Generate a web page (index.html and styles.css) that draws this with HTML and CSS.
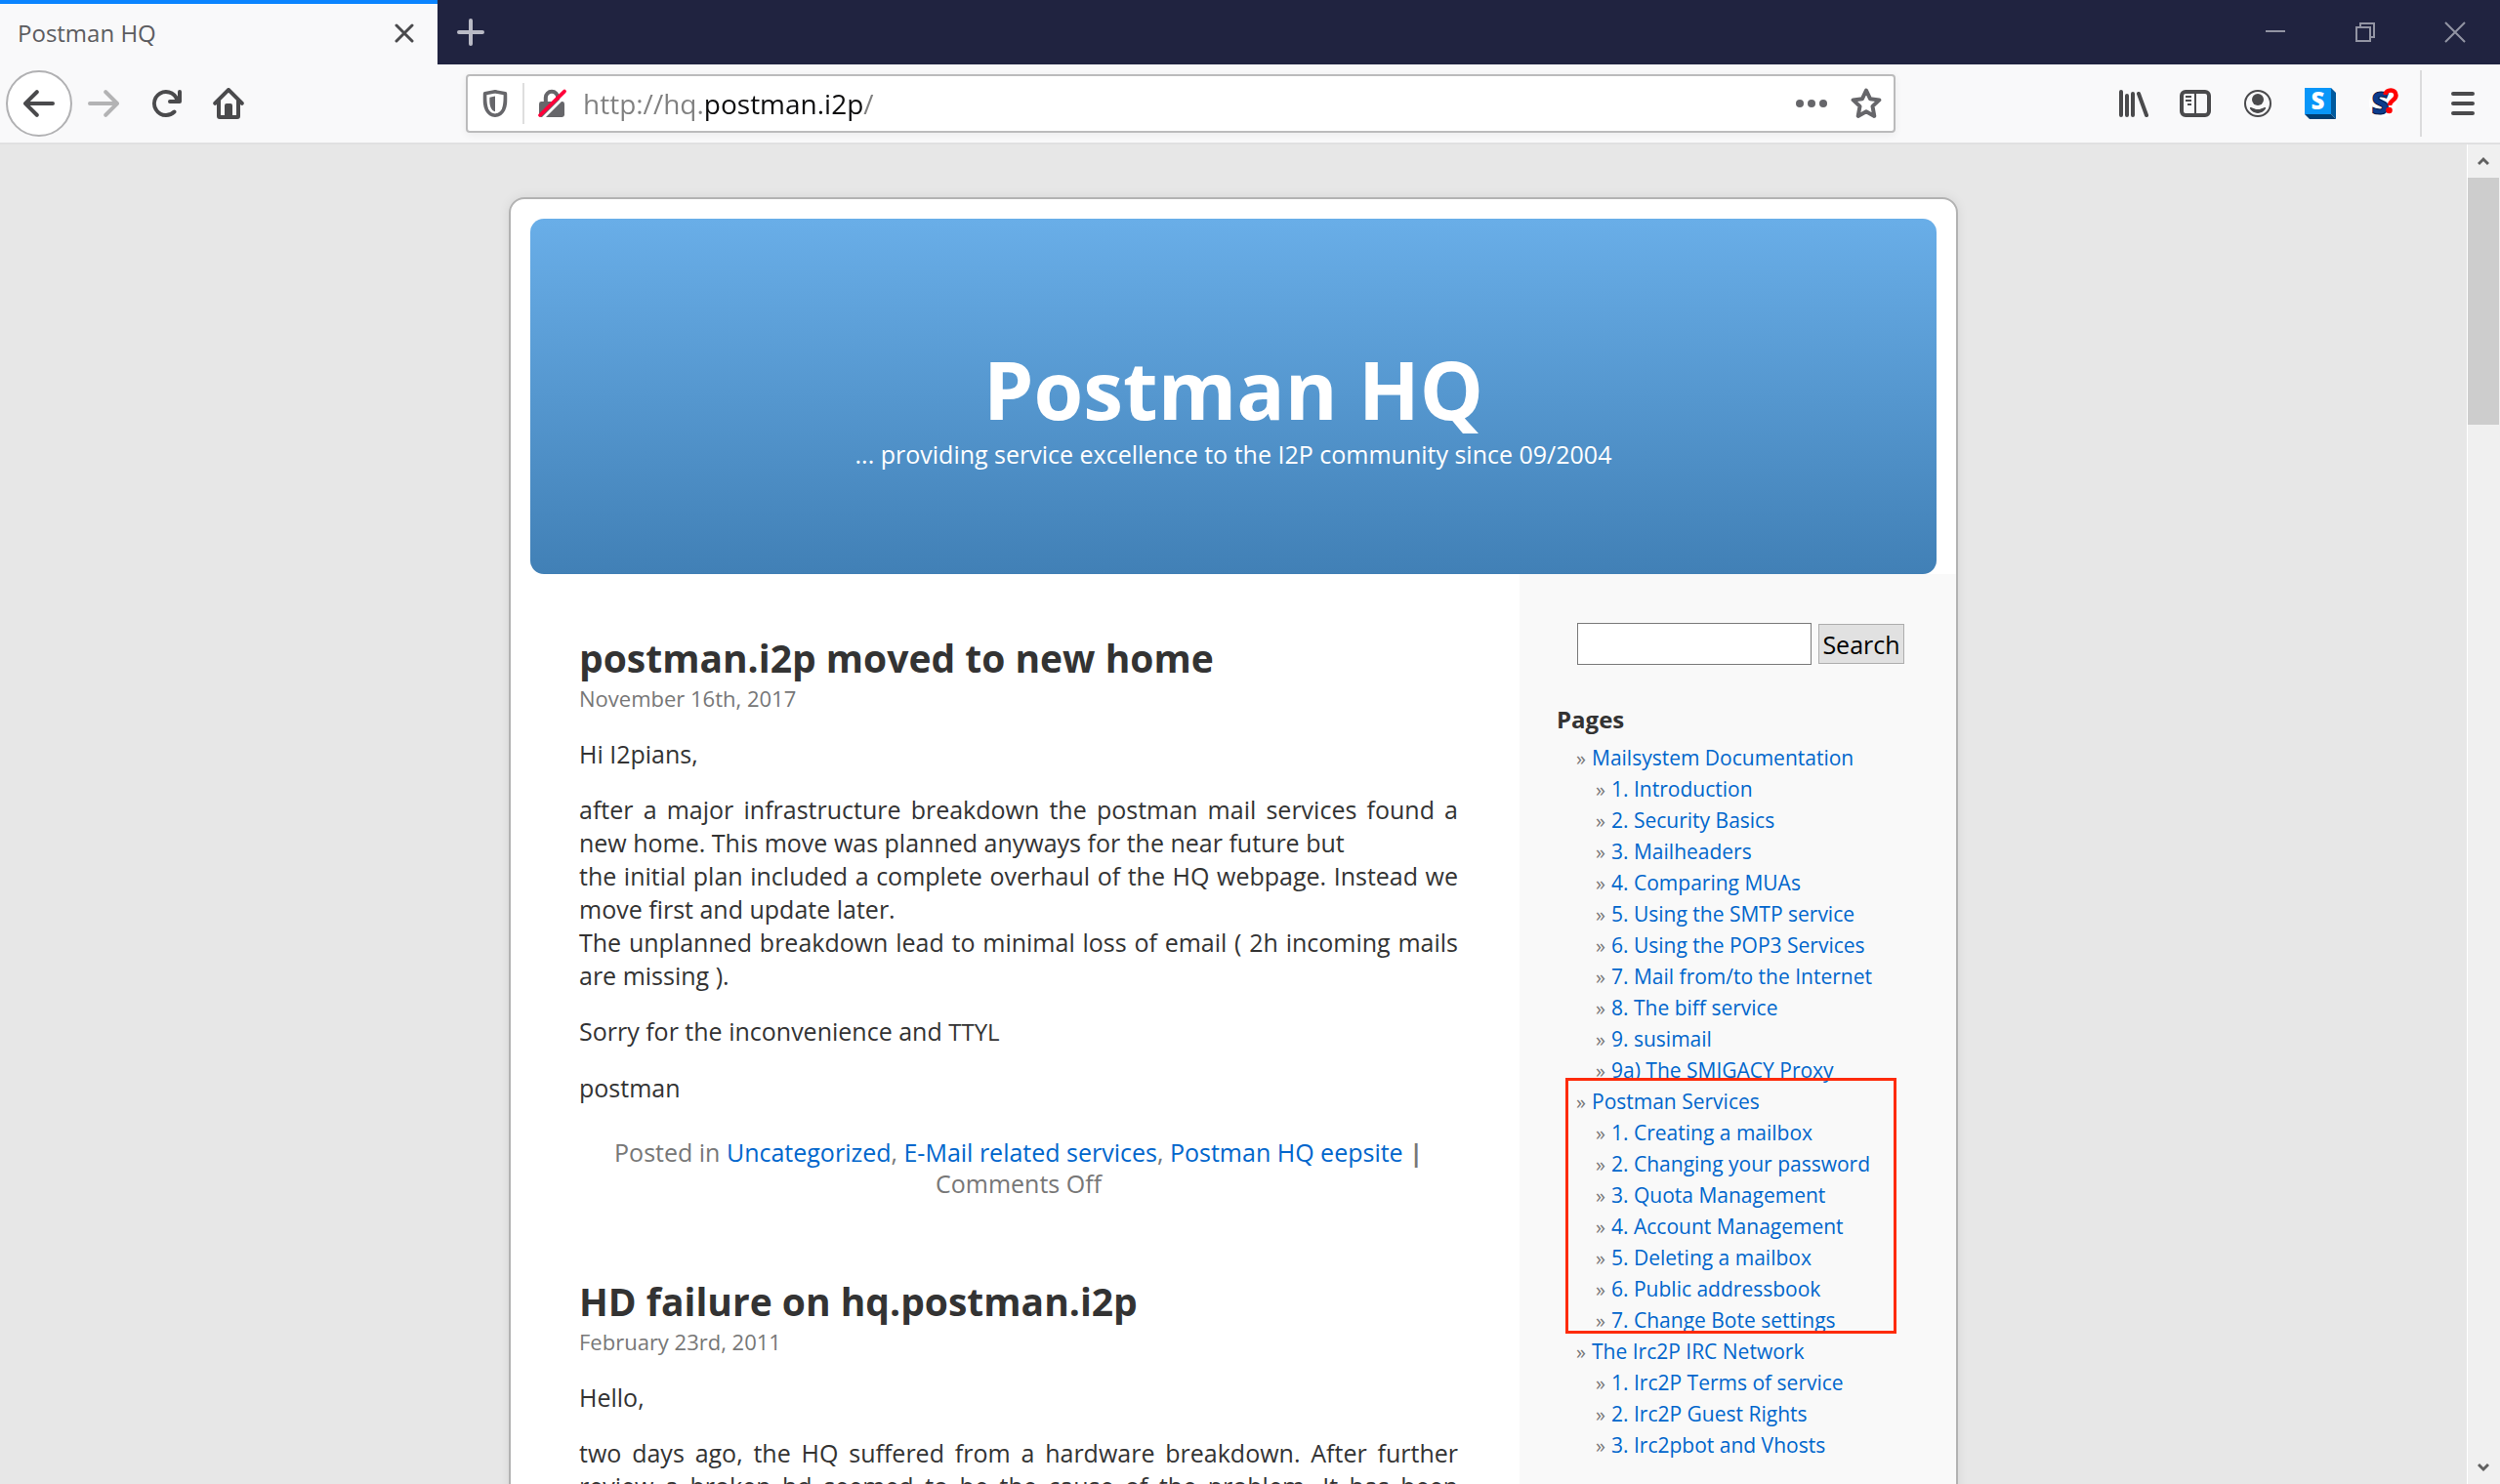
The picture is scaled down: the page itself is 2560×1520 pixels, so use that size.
FILE: index.html
```html
<!DOCTYPE html>
<html lang="en">
<head>
<meta charset="utf-8">
<title>Postman HQ</title>
<link rel="stylesheet" href="styles.css">
</head>
<body class="browser">

<header class="tabbar">
  <div class="tab">
    <span class="tab-title">Postman HQ</span>
    <button class="icon-btn tab-close" aria-label="Close tab">
      <svg width="20" height="20" viewBox="0 0 20 20"><path d="M2 2l16 16M18 2L2 18" stroke="#4a4a4c" stroke-width="3" stroke-linecap="round"/></svg>
    </button>
  </div>
  <button class="icon-btn new-tab" aria-label="New tab">
    <svg width="28" height="28" viewBox="0 0 28 28"><path d="M14 2v24M2 14h24" stroke="#b9bac5" stroke-width="4" stroke-linecap="round"/></svg>
  </button>
  <div class="window-controls">
    <button class="icon-btn window-btn" aria-label="Minimize"><svg width="22" height="22" viewBox="0 0 22 22"><path d="M1 10h20" stroke="#9294a3" stroke-width="2"/></svg></button>
    <button class="icon-btn window-btn" aria-label="Restore"><svg width="22" height="22" viewBox="0 0 22 22" fill="none" stroke="#9294a3" stroke-width="2"><path d="M2 6h14v14H2zM6 6V2h14v14h-4"/></svg></button>
    <button class="icon-btn window-btn" aria-label="Close window"><svg width="22" height="22" viewBox="0 0 22 22"><path d="M1 1l20 20M21 1L1 21" stroke="#9294a3" stroke-width="2"/></svg></button>
  </div>
</header>

<nav class="toolbar" aria-label="Browser toolbar">
  <button class="icon-btn back-btn" aria-label="Back">
    <svg width="32" height="32" viewBox="0 0 16 16" fill="#4a4a4c"><path d="M15 7H3.4l4.3-4.3a1 1 0 0 0-1.4-1.4l-6 6a1 1 0 0 0 0 1.4l6 6a1 1 0 0 0 1.4-1.4L3.4 9H15a1 1 0 0 0 0-2z"/></svg>
  </button>
  <button class="icon-btn tool-btn" aria-label="Forward" disabled>
    <svg width="32" height="32" viewBox="0 0 16 16" fill="#b3b3b4"><path d="M1 7h11.6L8.3 2.7a1 1 0 0 1 1.4-1.4l6 6a1 1 0 0 1 0 1.4l-6 6a1 1 0 0 1-1.4-1.4L12.600 9H1a1 1 0 0 1 0-2z"/></svg>
  </button>
  <button class="icon-btn tool-btn" aria-label="Reload">
    <svg width="32" height="32" viewBox="0 0 16 16" fill="#4a4a4c"><path d="M15 1a1 1 0 0 0-1 1v2.418A6.995 6.995 0 1 0 8 15a6.954 6.954 0 0 0 4.950-2.050 1 1 0 0 0-1.414-1.414A5.019 5.019 0 1 1 12.549 6H10a1 1 0 0 0 0 2h5a1 1 0 0 0 1-1V2a1 1 0 0 0-1-1z"/></svg>
  </button>
  <button class="icon-btn tool-btn" aria-label="Home">
    <svg width="32" height="32" viewBox="0 0 16 16" fill="#4a4a4c"><path fill-rule="evenodd" d="M15.700 7.300l-7-7a1 1 0 0 0-1.400 0l-7 7a1 1 0 0 0 1.400 1.400L2 8.400V14.500A1.500 1.500 0 0 0 3.500 16h9a1.500 1.500 0 0 0 1.500-1.500V8.400l.3.3a1 1 0 0 0 1.400-1.400zM12 14h-2V9a1 1 0 0 0-1-1H7a1 1 0 0 0-1 1v5H4V6.400l4-4 4 4z"/><path fill-rule="evenodd" d="M6.500 8.500h3V14h-3zM8.400 10.800a.6.6 0 1 0 0 1.200.6.6 0 0 0 0-1.200z"/></svg>
  </button>

  <div class="urlbar">
    <button class="icon-btn url-btn" aria-label="Tracking protection">
      <svg width="32" height="32" viewBox="0 0 16 16"><path d="M8 1.900L13.200 2.900c.1 4.600.1 6.200-1 8.400-1 1.800-2.400 2.700-4.200 2.800-1.800-.1-3.200-1-4.200-2.800-1.100-2.200-1.100-3.800-1-8.400z" fill="none" stroke="#66666a" stroke-width="1.800" stroke-linejoin="round"/><path d="M8 4.300v7.800c-1-.3-1.700-.8-2.200-2-.6-1.400-.7-2.900-.6-5.200z" fill="#66666a"/></svg>
    </button>
    <span class="url-sep"></span>
    <button class="icon-btn url-btn lock-btn" aria-label="Connection is not secure">
      <svg width="32" height="32" viewBox="0 0 16 16"><path d="M4.900 7.500V5a3.100 3.100 0 0 1 6.200 0v2.500" fill="none" stroke="#66666a" stroke-width="2"/><rect x="1.500" y="7" width="13" height="8" rx="1.200" fill="#66666a"/><path d="M3.500 15.500L15.500 3.500" stroke="#fff" stroke-width="1.400"/><path d="M2 14L14.500 1.800" stroke="#ff0039" stroke-width="1.900" stroke-linecap="round"/></svg>
    </button>
    <input class="url-input" type="text" aria-label="Address" value="http://hq.postman.i2p/">
    <button class="icon-btn url-btn" aria-label="Page actions">
      <svg width="32" height="32" viewBox="0 0 32 32" fill="#66666a"><circle cx="4" cy="16" r="4"/><circle cx="16" cy="16" r="4"/><circle cx="28" cy="16" r="4"/></svg>
    </button>
    <button class="icon-btn url-btn" aria-label="Bookmark this page">
      <svg width="32" height="32" viewBox="0 0 32 32" fill="none" stroke="#66666a" stroke-width="4" stroke-linejoin="round"><path d="M16 2.500l4 8.700 9.400 1.200-6.900 6.500 1.800 10-8.300-4.600-8.300 4.600 1.800-10-6.900-6.500 9.400-1.200z"/></svg>
    </button>
  </div>

  <button class="icon-btn tool-btn" aria-label="Library">
    <svg width="32" height="32" viewBox="0 0 32 32" stroke="#4a4a4c" stroke-width="4" stroke-linecap="round"><path d="M4 4v24M10 8v20M16 6v22M22 6l8 22"/></svg>
  </button>
  <button class="icon-btn tool-btn" aria-label="Sidebars">
    <svg width="32" height="32" viewBox="0 0 32 32" fill="none" stroke="#4a4a4c"><rect x="2" y="4" width="28" height="24" rx="4" stroke-width="4"/><path d="M16 4v24M6 9h6M6 13h6M8 17h4" stroke-width="2"/></svg>
  </button>
  <button class="icon-btn tool-btn" aria-label="Account">
    <svg width="32" height="32" viewBox="0 0 32 32"><circle cx="16" cy="16" r="13" fill="none" stroke="#4a4a4c" stroke-width="2"/><circle cx="16" cy="12" r="6" fill="#4a4a4c"/><path d="M8 20c3 0 4 2 8 2s5-2 8-2c1 2-4 6-8 6s-9-4-8-6z" fill="#4a4a4c"/></svg>
  </button>
  <button class="icon-btn tool-btn" aria-label="Script blocker">
    <svg class="badge-icon" width="32" height="32" viewBox="0 0 32 32"><path d="M0 0h27v27H0z" fill="#0996f8"/><path d="M27 0l5 5v27l-5-5z" fill="#005a9e"/><path d="M0 27h27l5 5H5z" fill="#003f73"/><text x="13.500" y="22" text-anchor="middle" class="glyph glyph-light">S</text></svg>
  </button>
  <button class="icon-btn tool-btn" aria-label="Script blocker options">
    <svg class="badge-icon" width="32" height="32" viewBox="0 0 32 32"><circle cx="16" cy="16" r="14" fill="#fff"/><text x="13.500" y="27" text-anchor="middle" class="glyph glyph-navy">S</text><path d="M18.500 7C19 1 29.500.5 29.500 7.500c0 5.500-6.500 5-6.500 10.500" fill="none" stroke="#f00" stroke-width="4.500"/><circle cx="22.500" cy="23" r="3.300" fill="#f00"/></svg>
  </button>
  <span class="toolbar-sep"></span>
  <button class="icon-btn tool-btn" aria-label="Open menu">
    <svg width="32" height="32" viewBox="0 0 32 32" stroke="#4a4a4c" stroke-width="4" stroke-linecap="round"><path d="M6 6h20M6 16h20M6 26h20"/></svg>
  </button>
</nav>

<div class="viewport">
  <div class="site">
    <div class="page">
      <header class="banner">
        <h1 class="banner-title">Postman HQ</h1>
        <p class="banner-tagline">... providing service excellence to the I2P community since 09/2004</p>
      </header>
      <div class="columns">
        <main class="posts">
          <article class="post">
            <h2 class="post-title">postman.i2p moved to new home</h2>
            <p class="post-date">November 16th, 2017</p>
            <div class="post-body">
              <p>Hi I2pians,</p>
              <p>after a major infrastructure breakdown the postman mail services found a new home. This move was planned anyways for the near future but<br>
              the initial plan included a complete overhaul of the HQ webpage. Instead we move first and update later.<br>
              The unplanned breakdown lead to minimal loss of email ( 2h incoming mails are missing ).</p>
              <p>Sorry for the inconvenience and <span class="acronym">TTYL</span></p>
              <p>postman</p>
            </div>
            <p class="post-meta">Posted in <a href="#">Uncategorized</a>, <a href="#">E-Mail related services</a>, <a href="#">Postman HQ eepsite</a> <strong class="bar">|</strong> Comments Off</p>
          </article>
          <article class="post">
            <h2 class="post-title">HD failure on hq.postman.i2p</h2>
            <p class="post-date">February 23rd, 2011</p>
            <div class="post-body">
              <p>Hello,</p>
              <p>two days ago, the HQ suffered from a hardware breakdown. After further review a broken hd seemed to be the cause of the problem. It has been replaced.</p>
            </div>
          </article>
        </main>
        <aside class="sidebar">
          <form class="search">
            <input class="search-input" type="text" aria-label="Search for">
            <button class="search-btn" type="button">Search</button>
          </form>
          <h2 class="sidebar-title">Pages</h2>
          <ul class="pages">
            <li><a href="#">Mailsystem Documentation</a>
              <ul>
                <li><a href="#">1. Introduction</a></li>
                <li><a href="#">2. Security Basics</a></li>
                <li><a href="#">3. Mailheaders</a></li>
                <li><a href="#">4. Comparing MUAs</a></li>
                <li><a href="#">5. Using the SMTP service</a></li>
                <li><a href="#">6. Using the POP3 Services</a></li>
                <li><a href="#">7. Mail from/to the Internet</a></li>
                <li><a href="#">8. The biff service</a></li>
                <li><a href="#">9. susimail</a></li>
                <li><a href="#">9a) The SMIGACY Proxy</a></li>
              </ul>
            </li>
            <li class="marked"><a href="#">Postman Services</a>
              <ul>
                <li><a href="#">1. Creating a mailbox</a></li>
                <li><a href="#">2. Changing your password</a></li>
                <li><a href="#">3. Quota Management</a></li>
                <li><a href="#">4. Account Management</a></li>
                <li><a href="#">5. Deleting a mailbox</a></li>
                <li><a href="#">6. Public addressbook</a></li>
                <li><a href="#">7. Change Bote settings</a></li>
              </ul>
            </li>
            <li><a href="#">The Irc2P IRC Network</a>
              <ul>
                <li><a href="#">1. Irc2P Terms of service</a></li>
                <li><a href="#">2. Irc2P Guest Rights</a></li>
                <li><a href="#">3. Irc2pbot and Vhosts</a></li>
              </ul>
            </li>
          </ul>
        </aside>
      </div>
    </div>
  </div>
  <div class="scrollbar">
    <button class="icon-btn scroll-btn" aria-label="Scroll up"><svg width="12" height="10" viewBox="0 0 12 10" fill="none" stroke="#606060" stroke-width="3"><path d="M1 8l5-5 5 5"/></svg></button>
    <div class="scroll-thumb"></div>
    <button class="icon-btn scroll-btn scroll-down" aria-label="Scroll down"><svg width="12" height="10" viewBox="0 0 12 10" fill="none" stroke="#606060" stroke-width="3"><path d="M1 2l5 5 5-5"/></svg></button>
  </div>
</div>

</body>
</html>
```
FILE: styles.css
```css
* { box-sizing: border-box; }

body, h1, h2, p, ul { margin: 0; padding: 0; }

.browser {
  display: flex;
  flex-direction: column;
  height: 100vh;
  overflow: hidden;
  font-family: "Open Sans", "Noto Sans", sans-serif;
  color: #333;
  background: #e7e7e7;
}

a { color: #06c; text-decoration: none; }

.icon-btn {
  display: flex;
  align-items: center;
  justify-content: center;
  flex: none;
  padding: 0;
  border: 0;
  background: none;
}

/* Tab strip */
.tabbar {
  display: flex;
  flex: none;
  height: 66px;
  background: #202340;
}

.tab {
  display: flex;
  align-items: center;
  justify-content: space-between;
  width: 448px;
  padding: 0 24px 2px 18px;
  border-top: 4px solid #0a84ff;
  background: #f9f9fa;
}

.tab-title { font-size: 24px; line-height: 32px; color: #5c5c60; }
.new-tab { width: 68px; }
.window-controls { display: flex; margin-left: auto; }
.window-btn { width: 92px; }

/* Navigation toolbar */
.toolbar {
  display: flex;
  align-items: center;
  flex: none;
  height: 82px;
  padding: 0 6px;
  border-bottom: 2px solid #e0e0e1;
  background: #f9f9fa;
}

.back-btn {
  width: 68px;
  height: 68px;
  border: 2px solid #b1b1b3;
  border-radius: 50%;
  background: #fff;
}

.tool-btn { width: 64px; height: 64px; }

.toolbar-sep {
  width: 2px;
  height: 68px;
  margin: 0 10px 0 6px;
  background: #dcdcdd;
}

.urlbar {
  display: flex;
  align-items: center;
  flex: 1;
  height: 60px;
  margin: 0 211px;
  padding: 0 12px;
  border: 2px solid #bbbbbc;
  border-radius: 4px;
  background: #fff;
  box-shadow: 0 2px 8px rgba(0, 0, 0, .06);
}

.url-btn { width: 32px; height: 32px; }
.url-btn + .url-btn { margin-left: 24px; }
.url-sep { width: 2px; height: 42px; margin: 0 12px; background: #dedede; }

/* The host part of the address is darker than the rest */
.url-input {
  flex: 1;
  min-width: 0;
  height: 40px;
  margin-left: 16px;
  padding: 0;
  border: 0;
  outline: 0;
  font: 28px/40px "Open Sans", "Noto Sans", sans-serif;
  color: transparent;
  background: linear-gradient(90deg, #808080 123px, #0c0c0d 123px, #0c0c0d 286px, #808080 286px);
  -webkit-background-clip: text;
  background-clip: text;
}

.badge-icon { overflow: visible; }
.glyph { font-family: "Open Sans", "Noto Sans", sans-serif; font-weight: 800; }
.glyph-light { font-size: 24px; fill: #fff; }
.glyph-navy { font-size: 31px; fill: #0c3c8c; stroke: #06184a; }

/* Page area */
.viewport { display: flex; flex: 1; min-height: 0; }
.site { flex: 1; overflow: hidden; padding-top: 54px; }

.page {
  max-width: 1484px;
  margin: 0 auto;
  border: 2px solid #b2b2b2;
  border-radius: 16px 16px 0 0;
  background: #fff;
  box-shadow: 0 0 12px rgba(0, 0, 0, .08);
}

.banner {
  margin: 20px 20px 0;
  padding: 124px 20px 106px;
  border-radius: 14px;
  text-align: center;
  color: #fff;
  background: linear-gradient(#69aee8, #4180b6);
}

.banner-title { font-size: 82px; line-height: 100px; }
.banner-tagline { font-size: 25px; line-height: 34px; }

.columns { display: grid; grid-template-columns: 1fr 447px; }

/* Posts */
.posts { padding: 61px 63px 0 70px; }
.post + .post { margin-top: 80px; }
.post-title { font-size: 39px; line-height: 50px; }
.post-date { font-size: 22px; line-height: 32px; color: #777; }

.post-body {
  display: flex;
  flex-direction: column;
  gap: 23px;
  margin-top: 24px;
  font-size: 25px;
  line-height: 34px;
  text-align: justify;
}

.acronym { font-size: 24px; }

.post-meta {
  margin-top: 33px;
  font-size: 25px;
  line-height: 32px;
  text-align: center;
  color: #777;
}

.bar { font-weight: 700; }

/* Sidebar */
.sidebar { padding: 50px 39px 40px 38px; background: #f9f9f9; }

.search { display: flex; align-items: center; gap: 7px; padding-left: 21px; }

.search-input {
  width: 240px;
  height: 43px;
  border: 1px solid #7a7a7a;
  background: #fff;
}

.search-btn {
  width: 88px;
  height: 41px;
  padding: 0;
  border: 1px solid #adadad;
  font: 25px/32px "Open Sans", "Noto Sans", sans-serif;
  color: #000;
  background: #e1e1e1;
}

.sidebar-title { margin-top: 40px; font-size: 24px; line-height: 32px; }

.pages { margin-top: 7px; padding-left: 20px; font-size: 21px; line-height: 32px; }
.pages ul { padding-left: 20px; }
.pages li { list-style: none; }

.pages li::before {
  content: "\00BB";
  display: inline-block;
  width: 16px;
  font-size: 20px;
  line-height: 20px;
  color: #777;
}

/* Red frame drawn over one group of links */
.marked { position: relative; }

.marked::after {
  content: "";
  position: absolute;
  inset: -8px 22px 2px -11px;
  border: 3px solid #fe2b0a;
  pointer-events: none;
}

/* Scrollbar */
.scrollbar {
  display: flex;
  flex-direction: column;
  width: 34px;
  padding-right: 1px;
  border-left: 1px solid #fff;
  background: #f0f0f0;
}

.scroll-btn { height: 34px; }
.scroll-thumb { height: 253px; background: #cdcdcd; }
.scroll-down { margin-top: auto; }
```
